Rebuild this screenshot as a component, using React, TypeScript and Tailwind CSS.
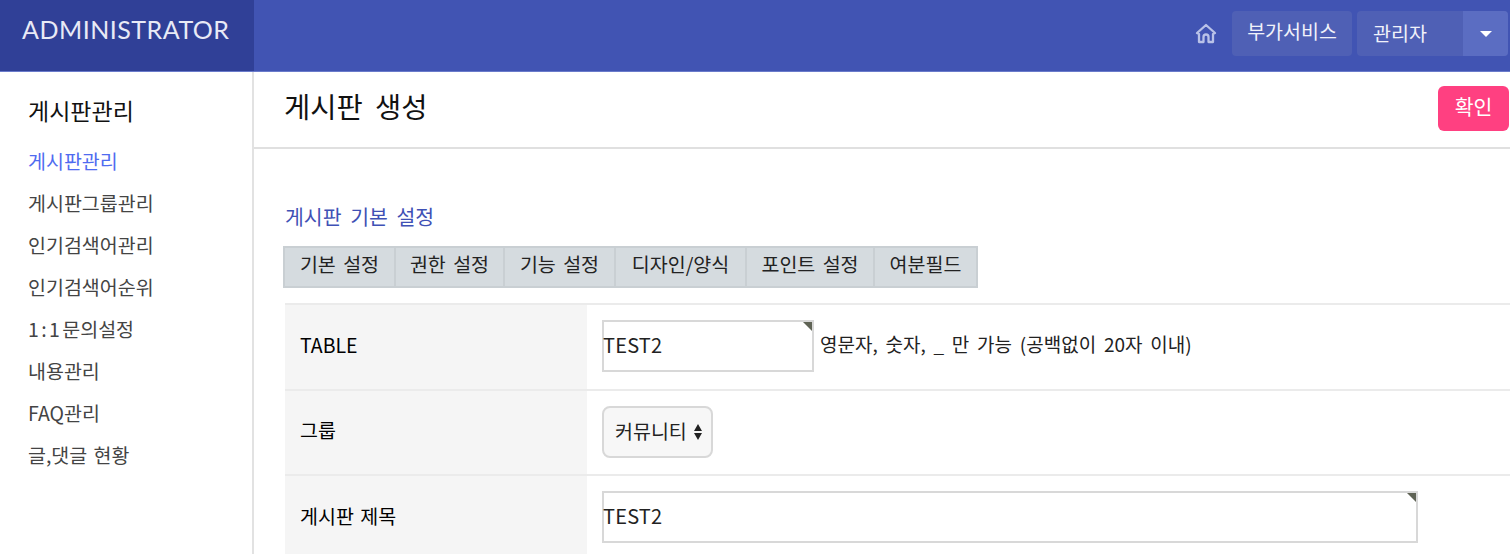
import React from "react";

const MENU = [
  "게시판관리",
  "게시판그룹관리",
  "인기검색어관리",
  "인기검색어순위",
  "1:1문의설정",
  "내용관리",
  "FAQ관리",
  "글,댓글 현황",
];

const TABS = [
  { label: "기본 설정", width: "w-[109px]" },
  { label: "권한 설정", width: "w-[109px]" },
  { label: "기능 설정", width: "w-[111px]" },
  { label: "디자인/양식", width: "w-[131px]" },
  { label: "포인트 설정", width: "w-[128px]" },
  { label: "여분필드", width: "w-[103px]" },
];

// 입력칸 오른쪽 위 삼각형 표시
function CornerInput({ value, width }: { value: string; width: string }) {
  return (
    <div className={`relative h-[52px] ${width} border-2 border-[#d8d8d8] bg-white flex items-center pb-[3px] text-[20px] tracking-[0.2px] text-[#222]`}>
      <span className="-ml-px">{value}</span>
      <span className="absolute top-0 right-0 w-0 h-0 border-t-[9px] border-l-[9px] border-t-[#5f6355] border-l-transparent" />
    </div>
  );
}

function Row({ label, children }: { label: string; children: React.ReactNode }) {
  return (
    <div className="flex h-[85.5px] border-b-2 border-[#ebebeb]">
      <div className="w-[302px] shrink-0 bg-[#f5f5f5] flex items-center pb-[5px] pl-[15px] text-[19.5px] [word-spacing:2px] text-black">
        {label}
      </div>
      <div className="flex-1 flex items-center pb-px pl-[15px]">{children}</div>
    </div>
  );
}

export default function App() {
  return (
    <div className="w-[1510px] h-[554px] overflow-hidden bg-white flex flex-col font-['Noto_Sans_CJK_KR','Noto_Sans',sans-serif]">
      <header className="h-[72px] shrink-0 flex bg-[#4154b3] border-b border-[#6a7bcb]">
        <div className="w-[254px] bg-[#304097] flex items-center pl-[22px] pb-[12px] text-[25px] tracking-[0.5px] text-[#e8eaf6] font-['Lato',sans-serif]">
          ADMINISTRATOR
        </div>
        <div className="flex-1 flex items-start justify-end pt-[11px] pr-[2px]">
          <svg className="mt-[11px] mr-[15px] w-[22px] h-[22px]" viewBox="0 0 22 22" fill="none" stroke="#b9c2e8" strokeWidth="2.3" strokeLinejoin="round" strokeLinecap="round">
            <path d="M2 11 L11 3 L20 11 L18 12 V20 H13.5 V15 a2.5 2.5 0 0 0 -5 0 V20 H4 V12 Z" />
          </svg>
          <div className="w-[120px] h-[45px] rounded-[4px] bg-[#4f60b5] text-[#f1f2fa] text-[19.5px] flex items-center justify-center pb-[5px]">
            부가서비스
          </div>
          <div className="ml-[5px] w-[151px] h-[45px] rounded-[4px] bg-[#4f60b5] flex overflow-hidden">
            <div className="flex-1 text-[#f1f2fa] text-[19.5px] flex items-center pl-[16px] pb-[2px]">관리자</div>
            <div className="w-[45px] bg-[#5b6dc2] flex items-center justify-center">
              <span className="w-0 h-0 border-x-[6px] border-x-transparent border-t-[6px] border-t-white" />
            </div>
          </div>
        </div>
      </header>
      <div className="flex flex-1 min-h-0">
        <aside className="w-[254px] shrink-0 border-r-2 border-[#e2e2e2] pl-[28px] pt-[22px]">
          <h2 className="text-[23px] leading-[32px] text-[#111] mb-[14px]">게시판관리</h2>
          <ul>
            {MENU.map((item, i) => (
              <li
                key={item}
                className={`h-[42px] flex items-center text-[19.5px] [word-spacing:2px] ${i === 0 ? "text-[#4f6bf0]" : "text-[#444]"}`}
              >
                {item.startsWith("1:1") ? (
                  <>
                    <span className="tracking-[2.4px]">1:1</span>
                    {item.slice(3)}
                  </>
                ) : (
                  item
                )}
              </li>
            ))}
          </ul>
        </aside>
        <main className="flex-1 min-w-0">
          <div className="h-[77px] border-b-2 border-[#e0e0e0] flex items-start justify-between pl-[30px] pr-px pt-[14px]">
            <h1 className="text-[28.5px] leading-[40px] [word-spacing:6px] text-[#111]">게시판 생성</h1>
            <button className="w-[71px] h-[45px] rounded-[6px] bg-[#ff4081] text-white text-[20.5px] pb-[4px]">확인</button>
          </div>
          <div className="pl-[29px]">
            <h3 className="mt-[53px] pb-px pl-[2px] text-[20.5px] leading-[28px] [word-spacing:4px] text-[#3f51b5]">게시판 기본 설정</h3>
            <div className="mt-[15px] flex w-fit border-2 border-[#c9cfd3] bg-[#d5dbdf]">
              {TABS.map((tab, i) => (
                <div
                  key={tab.label}
                  className={`h-[38px] flex items-center justify-center pb-[6px] text-[19.5px] [word-spacing:3px] text-[#222] ${tab.width} ${i > 0 ? "border-l-2 border-[#c9cfd3]" : ""}`}
                >
                  {tab.label}
                </div>
              ))}
            </div>
            <div className="mt-[15px] ml-[2px] border-t-2 border-[#ebebeb]">
              <Row label="TABLE">
                <CornerInput value="TEST2" width="w-[212px]" />
                <span className="ml-[6px] pb-[5px] text-[19px] [word-spacing:3.5px] text-[#222]">영문자, 숫자, _ 만 가능 (공백없이 20자 이내)</span>
              </Row>
              <Row label="그룹">
                <div className="w-[111px] h-[52px] rounded-[8px] border-2 border-[#d8d8d8] bg-[#f7f7f7] flex items-center pl-[11px] pb-[3px] text-[19.5px] text-[#222]">
                  커뮤니티
                  <svg className="ml-[6px] mt-[3px] w-[10px] h-[18px]" viewBox="0 0 10 18" fill="#222">
                    <path d="M5 1 L9 8 H1 Z M1 10 H9 L5 17 Z" />
                  </svg>
                </div>
              </Row>
              <Row label="게시판 제목">
                <CornerInput value="TEST2" width="w-[816px]" />
              </Row>
            </div>
          </div>
        </main>
      </div>
    </div>
  );
}
